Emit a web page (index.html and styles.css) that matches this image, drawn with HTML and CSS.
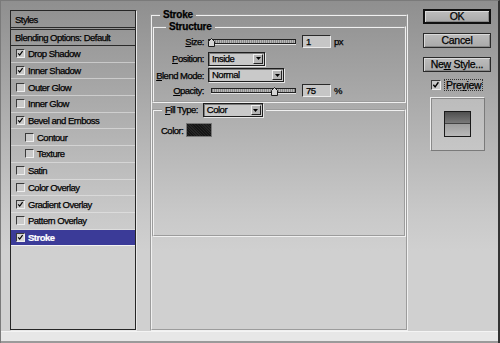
FILE: index.html
```html
<!DOCTYPE html>
<html>
<head>
<meta charset="utf-8">
<link rel="stylesheet" href="styles.css">
</head>
<body>
<div class="dialog">
  <div class="main">
    <div class="styles-panel">
      <div class="panel-head">Styles</div>
      <div class="panel-blend">Blending Options: Default</div>
      <div class="row"><span class="cb on"><svg viewBox="0 0 9 9"><path d="M1.5 4.2 L3.5 6.6 L7.2 1.4"/></svg></span>Drop Shadow</div>
      <div class="row"><span class="cb on"><svg viewBox="0 0 9 9"><path d="M1.5 4.2 L3.5 6.6 L7.2 1.4"/></svg></span>Inner Shadow</div>
      <div class="row"><span class="cb"></span>Outer Glow</div>
      <div class="row"><span class="cb"></span>Inner Glow</div>
      <div class="row"><span class="cb on"><svg viewBox="0 0 9 9"><path d="M1.5 4.2 L3.5 6.6 L7.2 1.4"/></svg></span>Bevel and Emboss</div>
      <div class="row sub"><span class="cb"></span>Contour</div>
      <div class="row sub"><span class="cb"></span>Texture</div>
      <div class="row"><span class="cb"></span>Satin</div>
      <div class="row"><span class="cb"></span>Color Overlay</div>
      <div class="row"><span class="cb on"><svg viewBox="0 0 9 9"><path d="M1.5 4.2 L3.5 6.6 L7.2 1.4"/></svg></span>Gradient Overlay</div>
      <div class="row"><span class="cb"></span>Pattern Overlay</div>
      <div class="row selected"><span class="cb on"><svg viewBox="0 0 9 9"><path d="M1.5 4.2 L3.5 6.6 L7.2 1.4"/></svg></span>Stroke</div>
    </div>

    <div class="content">
      <fieldset class="group outer">
        <legend class="legend-bold">Stroke</legend>
        <fieldset class="group structure">
          <legend class="legend-bold">Structure</legend>
          <div class="form">
            <label class="lbl"><u>S</u>ize:</label>
            <div class="ctrl">
              <div class="slider"><div class="track"></div><svg class="thumb" style="left:0px" viewBox="0 0 7 9"><path d="M3.5 0.5 L6.5 3.5 L6.5 8.5 L0.5 8.5 L0.5 3.5 Z"/></svg></div>
              <div class="input">1</div><span class="unit">px</span>
            </div>
            <label class="lbl"><u>P</u>osition:</label>
            <div class="ctrl">
              <div class="select w56"><span class="val">Inside</span><span class="arrow"><svg viewBox="0 0 5 3"><path d="M0 0 H5 L2.5 3 Z"/></svg></span></div>
            </div>
            <label class="lbl"><u>B</u>lend Mode:</label>
            <div class="ctrl">
              <div class="select w75"><span class="val">Normal</span><span class="arrow"><svg viewBox="0 0 5 3"><path d="M0 0 H5 L2.5 3 Z"/></svg></span></div>
            </div>
            <label class="lbl"><u>O</u>pacity:</label>
            <div class="ctrl">
              <div class="slider op"><div class="track"></div><svg class="thumb" style="left:60px" viewBox="0 0 7 9"><path d="M3.5 0.5 L6.5 3.5 L6.5 8.5 L0.5 8.5 L0.5 3.5 Z"/></svg></div>
              <div class="input">75</div><span class="unit">%</span>
            </div>
          </div>
        </fieldset>
        <fieldset class="group fill">
          <legend class="legend-fill"><span class="lbl-inline"><u>F</u>ill Type:</span><span class="select w59"><span class="val">Color</span><span class="arrow"><svg viewBox="0 0 5 3"><path d="M0 0 H5 L2.5 3 Z"/></svg></span></span></legend>
          <div class="color-row"><span>Color:</span><span class="swatch"></span></div>
        </fieldset>
      </fieldset>
    </div>

    <div class="buttons">
      <div class="btn default">OK</div>
      <div class="btn">Cancel</div>
      <div class="btn">Ne<u>w</u> Style...</div>
      <div class="preview-row"><span class="cb big on"><svg viewBox="0 0 9 9"><path d="M1.5 4.2 L3.5 6.6 L7.2 1.4"/></svg></span><span class="focus">Pre<u>v</u>iew</span></div>
      <div class="preview-box"><div class="preview-swatch"><div class="top"></div><div class="bot"></div></div></div>
    </div>
  </div>
  <div class="footer"></div>
</div>
</body>
</html>
```

FILE: styles.css
```css
* { box-sizing: border-box; }
html, body { margin: 0; padding: 0; }
body {
  width: 500px;
  height: 343px;
  overflow: hidden;
  font-family: "Liberation Sans", Arial, sans-serif;
  font-size: 9.5px;
  letter-spacing: -0.5px;
  color: #000;
  -webkit-text-stroke: 0.25px #000;
}
u { text-decoration: underline; text-underline-offset: 1px; }

.dialog {
  width: 500px;
  height: 343px;
  display: flex;
  flex-direction: column;
  background: linear-gradient(to bottom, #8f8f8f 0px, #adadad 110px, #c8c8c8 210px, #d0d0d0 250px, #d0d0d0 100%);
  border-right: 2px solid #333;
  border-left: 1px solid #7a7a7a;
  border-top: 1px solid #7a7a7a;
}
.main {
  display: flex;
  height: 330px;
}
.footer {
  height: 12px;
  background: #e7e7e7;
  border-bottom: 2px solid #9a9a9a;
  border-top: 1px solid #f4f4f4;
}

/* ---------- styles list ---------- */
.styles-panel {
  margin: 9px 0 0 9px;
  width: 126px;
  height: 320px;
  border: 1px solid #262626;
  box-shadow: 1px 1px 0 #e8e8e8;
  display: flex;
  flex-direction: column;
}
.panel-head {
  height: 19px;
  padding: 2px 0 0 4px;
  line-height: 13px;
  border-bottom: 3px double #2a2a2a;
}
.panel-blend {
  height: 16px;
  padding-left: 4px;
  line-height: 15px;
  border-bottom: 1px solid #2a2a2a;
}
.row {
  height: 16.7px;
  flex: none;
  display: flex;
  align-items: center;
  padding-left: 5px;
  border-bottom: 1px solid rgba(235,235,235,0.55);
  white-space: nowrap;
}
.row.sub { padding-left: 14px; }
.row.selected {
  background: #3b3b98;
  color: #fff;
  -webkit-text-stroke: 0.2px #fff;
  font-weight: bold;
  border-bottom: 1px solid #f2f2f2;
}
.cb {
  width: 9px;
  height: 9px;
  flex: none;
  margin-right: 3px;
  border: 1px solid;
  border-color: #3a3a3a #eeeeee #eeeeee #3a3a3a;
  background: #c9c9c9;
  display: inline-flex;
}
.cb svg { width: 100%; height: 100%; }
.cb svg path { fill: none; stroke: #000; stroke-width: 1.5; }
.row.selected .cb { background: #d8d8d8; }

/* ---------- content ---------- */
.content {
  margin: 8px 0 0 14px;
  width: 258px;
  display: flex;
}
fieldset.group {
  margin: 0;
  padding: 0;
  border: 2px groove #f0f0f0;
  min-width: 0;
}
.outer {
  flex: 1;
  padding: 0 5px 0 5px;
}
legend { padding: 0 3px; line-height: 12px; }
.legend-bold { font-weight: bold; font-size: 10px; letter-spacing: -0.2px; }
.outer > legend { margin-left: 8px; }
.structure { height: 82px; }
.structure > legend { margin-left: 12px; }
.form {
  display: grid;
  grid-template-columns: 50px 1fr;
  grid-template-rows: 17px 17px 16px 15px;
  column-gap: 4px;
}
.lbl {
  text-align: right;
  align-self: center;
  white-space: nowrap;
}
.ctrl {
  display: flex;
  align-items: center;
}
.slider {
  position: relative;
  width: 88px;
  height: 9px;
  display: flex;
  align-items: center;
}
.slider.op { margin-left: 3px; width: 85px; }
.track {
  width: 100%;
  height: 5px;
  border: 1px solid #222;
  background: repeating-linear-gradient(to right, #8a8a8a 0 1px, #b8b8b8 1px 2px);
  box-shadow: 0 1px 0 #e4e4e4;
}
.thumb {
  position: absolute;
  top: 1px;
  width: 7px;
  height: 9px;
}
.thumb path { fill: #d4d4d4; stroke: #1a1a1a; stroke-width: 1; }
.input {
  margin-left: 6px;
  width: 29px;
  height: 13px;
  border: 1px solid;
  border-color: #2a2a2a #ececec #ececec #2a2a2a;
  background: #c6c6c6;
  padding-left: 3px;
  line-height: 11px;
}
.unit { margin-left: 3px; }

.select {
  display: inline-flex;
  align-items: center;
  height: 14px;
  border: 1px solid #1e1e1e;
  background: #c9c9c9;
  box-shadow: inset 1px 1px 0 #7c7c7c, 1px 1px 0 #e6e6e6;
}
.w56 { width: 57px; }
.w75 { width: 76px; }
.w59 { width: 60px; }
.select .val { flex: 1; padding-left: 3px; line-height: 12px; }
.arrow {
  width: 10px;
  height: 10px;
  margin-right: 1px;
  border: 1px solid;
  border-color: #f0f0f0 #222 #222 #f0f0f0;
  background: #b4b4b4;
  display: flex;
  align-items: center;
  justify-content: center;
}
.arrow svg { width: 5px; height: 3px; }
.arrow svg path { fill: #000; }

.fill {
  margin-top: 7px;
  height: 134px;
}
.legend-fill {
  margin-left: 8px;
  display: flex;
  align-items: center;
  line-height: 14px;
}
.lbl-inline { margin-right: 5px; }
.color-row {
  display: flex;
  align-items: center;
  padding: 6px 0 0 7px;
  height: 20px;
}
.swatch {
  margin-left: 3px;
  width: 26px;
  height: 14px;
  border: 1px solid #777;
  background: repeating-linear-gradient(45deg, #151515 0 1px, #262626 1px 2px);
}

/* ---------- buttons ---------- */
.buttons {
  margin: 8px 0 0 15px;
  width: 68px;
  display: flex;
  flex-direction: column;
}
.btn {
  height: 15px;
  margin-bottom: 9px;
  border: 1px solid #2a2a2a;
  background: linear-gradient(#bdbdbd, #a9a9a9);
  box-shadow: inset 1px 1px 0 #dadada, inset -1px -1px 0 #888;
  text-align: center;
  line-height: 13px;
  font-size: 10.5px;
  letter-spacing: -0.3px;
}
.btn.default { border: 2px solid #111; line-height: 11px; }
.preview-row {
  display: flex;
  align-items: center;
  margin: -2px 0 0 8px;
  height: 11px;
}
.cb.big { width: 10px; height: 10px; margin-right: 4px; }
.focus {
  outline: 1px dotted #333;
  outline-offset: 0px;
  padding: 0 1px;
  line-height: 10px;
  font-size: 10.5px;
  letter-spacing: -0.3px;
}
.preview-box {
  margin: 7px 0 0 7px;
  width: 55px;
  height: 54px;
  border: 1px solid;
  border-color: #eeeeee #7a7a7a #7a7a7a #eeeeee;
  background: linear-gradient(#bcbcbc, #c6c6c6);
  box-shadow: inset 1px 1px 0 #8a8a8a;
  display: flex;
  align-items: center;
  justify-content: center;
}
.preview-swatch {
  width: 27px;
  height: 26px;
  border: 1px solid #1a1a1a;
  display: flex;
  flex-direction: column;
}
.preview-swatch .top { height: 50%; background: linear-gradient(#4f4f4f, #7a7a7a); border-bottom: 1px solid #444; }
.preview-swatch .bot { flex: 1; background: linear-gradient(#9e9e9e, #b9b9b9); }
```
